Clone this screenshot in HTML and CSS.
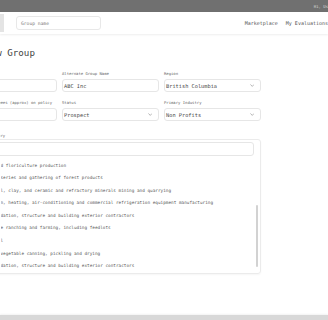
FILE: index.html
```html
<!DOCTYPE html>
<html lang="en">
<head>
  <meta charset="UTF-8" />
  <meta name="viewport" content="width=device-width, initial-scale=1.0"/>
  <title>Add New Group</title>
  <link rel="stylesheet" href="styles.css">
</head>
<body>
  <div class="topbar">
    <span class="greeting">Hi, User</span>
  </div>

  <nav class="navbar">
    <div class="logo"></div>
    <div class="search">Group name</div>
    <div class="nav-links">
      <a href="#">Marketplace</a>
      <a href="#">My Evaluations</a>
    </div>
  </nav>

  <main class="content">
    <h1>Add New Group</h1>

    <div class="form-grid">
      <div class="field">
        <label>Name</label>
        <div class="input"></div>
      </div>
      <div class="field">
        <label>Alternate Group Name</label>
        <div class="input">ABC Inc</div>
      </div>
      <div class="field">
        <label>Region</label>
        <div class="input select">British Columbia
          <svg class="chevron" viewBox="0 0 6 4"><path d="M0.6 0.6 L3 3.2 L5.4 0.6" /></svg>
        </div>
      </div>
      <div class="field">
        <label>Number of employees (approx) on policy</label>
        <div class="input"></div>
      </div>
      <div class="field">
        <label>Status</label>
        <div class="input select">Prospect
          <svg class="chevron" viewBox="0 0 6 4"><path d="M0.6 0.6 L3 3.2 L5.4 0.6" /></svg>
        </div>
      </div>
      <div class="field">
        <label>Primary Industry</label>
        <div class="input select">Non Profits
          <svg class="chevron" viewBox="0 0 6 4"><path d="M0.6 0.6 L3 3.2 L5.4 0.6" /></svg>
        </div>
      </div>
    </div>

    <div class="industry">
      <label>Secondary Industry</label>
      <div class="dropdown">
        <div class="dropdown-search"></div>
        <ul class="options">
          <li>d floriculture production</li>
          <li>series and gathering of forest products</li>
          <li>l, clay, and ceramic and refractory minerals mining and quarrying</li>
          <li>n, heating, air-conditioning and commercial refrigeration equipment manufacturing</li>
          <li>dation, structure and building exterior contractors</li>
          <li>e ranching and farming, including feedlots</li>
          <li>l</li>
          <li>vegetable canning, pickling and drying</li>
          <li>dation, structure and building exterior contractors</li>
        </ul>
        <div class="scroll-thumb"></div>
      </div>
    </div>
  </main>

  <footer class="footer"></footer>
</body>
</html>
```

FILE: styles.css
```css
* {
  box-sizing: border-box;
}

html, body {
  height: 100%;
}

body {
  margin: 0;
  font-family: 'DejaVu Sans Mono', 'Liberation Mono', monospace;
  color: #444;
  background: #fff;
  overflow: hidden;
  display: flex;
  flex-direction: column;
}

.topbar {
  height: 12px;
  background: #707070;
  display: flex;
  align-items: center;
  justify-content: flex-end;
}

.greeting {
  font-size: 4px;
  color: #d8d8d8;
  margin-right: -5px;
}

.navbar {
  height: 22px;
  display: flex;
  align-items: center;
  background: #fff;
  box-shadow: 0 1px 2px rgba(0, 0, 0, 0.07);
}

.logo {
  width: 24px;
  height: 18px;
  margin-left: -20px;
  background: #e4e4e4;
}

.search {
  width: 85px;
  height: 14px;
  margin-left: 12px;
  border: 1px solid #e8e8e8;
  border-radius: 3px;
  font-size: 4.65px;
  color: #777;
  display: flex;
  align-items: center;
  padding-left: 4px;
}

.nav-links {
  margin-left: auto;
  display: flex;
  gap: 8px;
}

.nav-links a {
  font-size: 5px;
  color: #555;
  text-decoration: none;
}

.content {
  margin-left: -37px;
  width: 298px;
  padding-top: 13px;
}

h1 {
  margin: 0 0 13px;
  font-size: 9.2px;
  line-height: 11px;
  font-weight: normal;
  color: #444;
}

.form-grid {
  display: grid;
  grid-template-columns: 94px 97px 97px;
  column-gap: 5px;
  row-gap: 8px;
}

label {
  display: block;
  font-size: 3.9px;
  line-height: 5px;
  color: #666;
  margin-bottom: 3px;
  white-space: nowrap;
}

.input {
  height: 13px;
  border: 1px solid #e6e6e6;
  border-radius: 3px;
  font-size: 5.3px;
  color: #4a4a4a;
  display: flex;
  align-items: center;
  padding: 0 1px;
}

.select {
  justify-content: space-between;
}

.chevron {
  width: 4.5px;
  height: 3px;
  margin-right: 5px;
  fill: none;
  stroke: #888;
  stroke-width: 0.8;
}

.industry {
  margin-top: 12px;
}

.industry label {
  margin-bottom: 1px;
}

.dropdown {
  position: relative;
  width: 298px;
  border: 1px solid #ebebeb;
  border-radius: 3px;
  padding: 2px 6px 0 2px;
  box-shadow: 0 1px 2px rgba(0, 0, 0, 0.04);
}

.dropdown-search {
  height: 14px;
  border: 1px solid #e6e6e6;
  border-radius: 3px;
}

.options {
  list-style: none;
  margin: 3.5px 0 0;
  padding: 0 0 0 34.5px;
}

.options li {
  height: 12.6px;
  line-height: 12.6px;
  font-size: 4.37px;
  color: #5a5a5a;
  white-space: nowrap;
  overflow: hidden;
}

.scroll-thumb {
  position: absolute;
  right: 2px;
  top: 65px;
  width: 2.3px;
  height: 62px;
  border-radius: 1px;
  background: #d2d2d2;
}

.footer {
  margin-top: auto;
  height: 5px;
  background: #d8d8d8;
  box-shadow: 0 -1px 2px rgba(0, 0, 0, 0.05);
}
```
